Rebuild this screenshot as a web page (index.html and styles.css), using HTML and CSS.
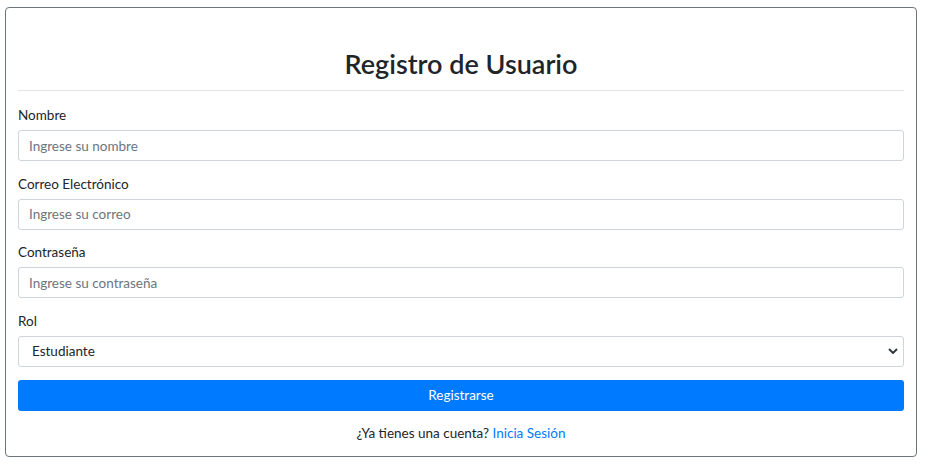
FILE: index.html
```html
<!DOCTYPE html>
<html lang="es">
<head>
<meta charset="utf-8">
<title>Registro de Usuario</title>
<link rel="stylesheet" href="styles.css">
</head>
<body>
<div class="card">
  <div class="card-body">
    <div class="card-header">
      <h3 class="title">Registro de Usuario</h3>
    </div>
    <form class="form">
      <div class="group">
        <label class="label" for="nombre">Nombre</label>
        <input class="control" id="nombre" type="text" placeholder="Ingrese su nombre">
      </div>
      <div class="group">
        <label class="label" for="correo">Correo Electrónico</label>
        <input class="control" id="correo" type="email" placeholder="Ingrese su correo">
      </div>
      <div class="group">
        <label class="label" for="pass">Contraseña</label>
        <input class="control" id="pass" type="password" placeholder="Ingrese su contraseña">
      </div>
      <div class="group">
        <label class="label" for="rol">Rol</label>
        <select class="control select" id="rol">
          <option>Estudiante</option>
          <option>Profesor</option>
        </select>
      </div>
      <button class="btn" type="button">Registrarse</button>
    </form>
    <p class="footer">¿Ya tienes una cuenta? <a class="link" href="#">Inicia Sesión</a></p>
  </div>
</div>
</body>
</html>
```
FILE: styles.css
```css
* { box-sizing: border-box; }
html, body { margin: 0; padding: 0; background: #fff; }
body {
  font-family: "Lato", "Open Sans", "Liberation Sans", sans-serif;
  font-size: 13.5px;
  line-height: 21px;
  color: #212529;
  padding: 7px 8px 0 5px;
}
.card {
  border: 1px solid #6c757d;
  border-radius: 4px;
  height: 450px;
}
.card-body {
  padding: 12px;
  display: flex;
  flex-direction: column;
}
.card-header {
  padding: 27px 0 9px;
  border-bottom: 1px solid #e2e4e6;
}
.title {
  margin: 0;
  text-align: center;
  font-size: 27px;
  line-height: 34px;
  font-weight: 600;
  color: #212529;
}
.form {
  margin-top: 14px;
  display: flex;
  flex-direction: column;
}
.group {
  display: flex;
  flex-direction: column;
  gap: 4px;
  margin-bottom: 12.67px;
}
.label { display: block; }
.control {
  height: 31px;
  width: 100%;
  border: 1px solid #ced4da;
  border-radius: 3px;
  padding: 0 10px;
  font-family: inherit;
  font-size: 13.5px;
  color: #212529;
  background: #fff;
}
.control::placeholder { color: #6c757d; }
.select {
  appearance: none;
  -webkit-appearance: none;
  padding-left: 13px;
  background-image: url("data:image/svg+xml,%3Csvg xmlns='http://www.w3.org/2000/svg' width='10' height='6' viewBox='0 0 10 6'%3E%3Cpath d='M1 1l4 4 4-4' fill='none' stroke='%23343a40' stroke-width='2'/%3E%3C/svg%3E");
  background-repeat: no-repeat;
  background-position: right 5px center;
  background-size: 10px 6px;
}
.btn {
  height: 31px;
  width: 100%;
  border: 0;
  border-radius: 3px;
  background: #007bff;
  color: #fff;
  font-family: inherit;
  font-size: 13.5px;
}
.footer {
  margin: 12px 0 0;
  text-align: center;
}
.link { color: #007bff; text-decoration: none; }
```
